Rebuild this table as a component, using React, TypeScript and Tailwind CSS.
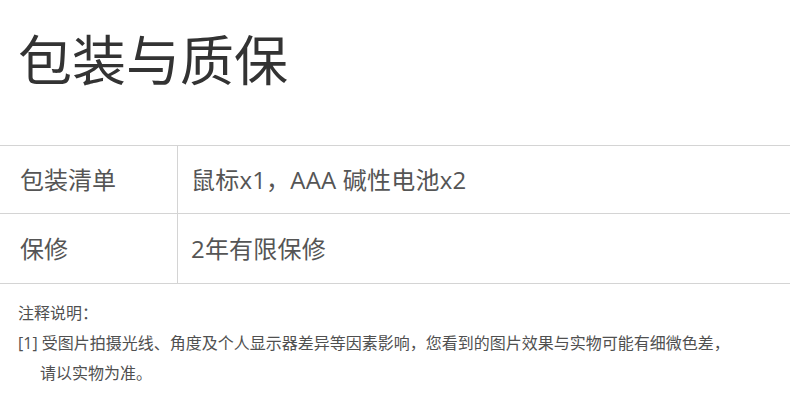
export default function App() {
  const rows = [
    { label: "包装清单", value: "鼠标x1，AAA 碱性电池x2", h: "h-[68px]" },
    { label: "保修", value: "2年有限保修", h: "h-[70px]" },
  ];

  return (
    <div
      className="w-[790px] h-[411px] bg-white text-[#555] overflow-hidden"
      style={{ fontFamily: '"Open Sans", "Noto Sans CJK SC", "Noto Sans", sans-serif' }}
    >
      <h1 className="h-[145px] pl-[18px] pt-[20px] text-[54px] leading-[80px] text-[#333] font-normal">
        包装与质保
      </h1>
      <div className="border-t border-[#d4d4d4]">
        {rows.map((r) => (
          <div key={r.label} className={`flex border-b border-[#d4d4d4] ${r.h}`}>
            <div className="w-[178px] border-r border-[#d4d4d4] pl-[20px] flex items-center text-[24px]">
              {r.label}
            </div>
            <div className="flex-1 pl-[13px] flex items-center text-[24px] tracking-[0.2px]">{r.value}</div>
          </div>
        ))}
      </div>
      <div className="pl-[18px] pt-[14px] text-[16px] leading-[30px] text-[#505050]">
        <p>注释说明：</p>
        <p>[1] 受图片拍摄光线、角度及个人显示器差异等因素影响，您看到的图片效果与实物可能有细微色差，</p>
        <p className="pl-[22px]">请以实物为准。</p>
      </div>
    </div>
  );
}
